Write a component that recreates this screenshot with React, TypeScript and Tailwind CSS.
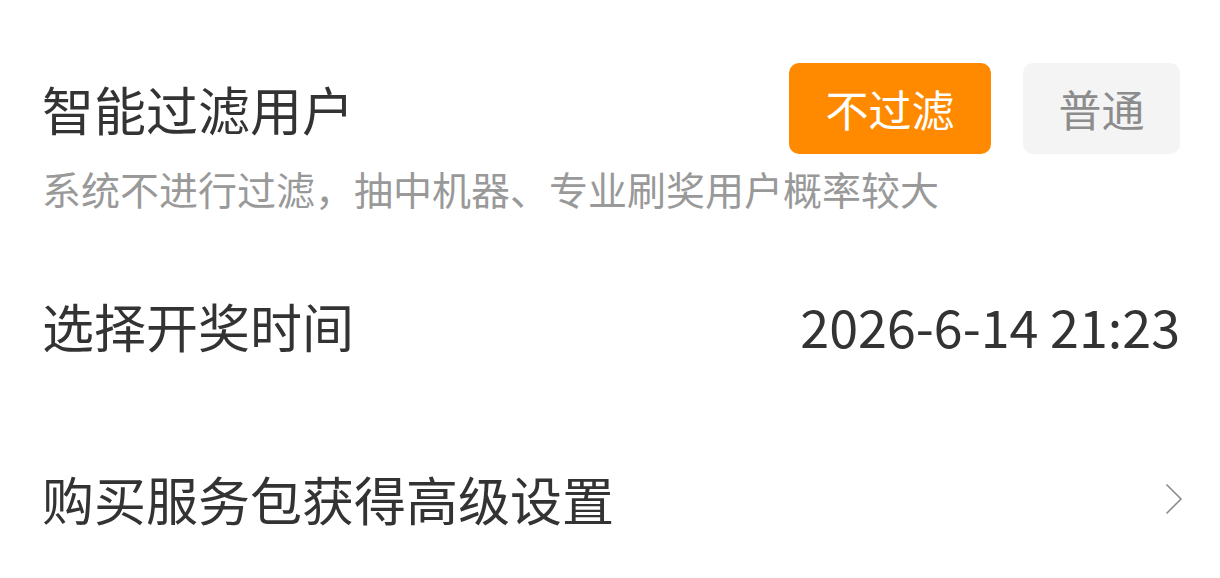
import { useState } from 'react'

const font = { fontFamily: '"Noto Sans CJK SC", "Noto Sans", sans-serif' }

const App = () => {
  const [mode, setMode] = useState<'none' | 'normal'>('none')

  return (
    <div
      className="h-[578px] w-full overflow-hidden bg-white px-10 text-[#333333]"
      style={font}>
      <div className="mt-[63px] flex h-[91px] items-center justify-between">
        <span className="pl-[2px] text-[52px] leading-none">智能过滤用户</span>
        <div className="flex items-center gap-x-8">
          <button
            onClick={() => setMode('none')}
            className={`flex h-[91px] w-[202px] items-center justify-center rounded-[10px] text-[43px] leading-none ${
              mode === 'none'
                ? 'bg-[#ff8a00] text-white'
                : 'bg-[#f4f4f4] text-[#8c8c8c]'
            }`}>
            不过滤
          </button>
          <button
            onClick={() => setMode('normal')}
            className={`flex h-[91px] w-[157px] items-center justify-center rounded-[10px] text-[43px] leading-none ${
              mode === 'normal'
                ? 'bg-[#ff8a00] text-white'
                : 'bg-[#f4f4f4] text-[#8c8c8c]'
            }`}>
            普通
          </button>
        </div>
      </div>

      <p className="mt-[15px] h-[39px] pl-[2px] text-[39px] leading-none text-[#999999]">
        系统不进行过滤，抽中机器、专业刷奖用户概率较大
      </p>

      <div className="mt-[58px] flex h-[120px] items-center justify-between">
        <span className="pl-[2px] text-[52px] leading-none">选择开奖时间</span>
        <span className="text-[52px] leading-none">2026-6-14 21:23</span>
      </div>

      <div className="mt-[53px] flex h-[120px] items-center justify-between">
        <span className="pl-[2px] text-[52px] leading-none">
          购买服务包获得高级设置
        </span>
        <svg
          width="18"
          height="32"
          viewBox="0 0 18 32"
          fill="none"
          stroke="#8c8c8c"
          strokeWidth="1.6"
          className="mr-[-3px]">
          <path d="M1.5 1.5 L16 16 L1.5 30.5" />
        </svg>
      </div>
    </div>
  )
}

export default App
